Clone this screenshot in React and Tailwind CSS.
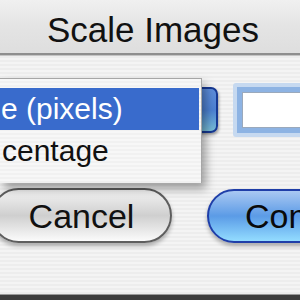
import React from "react";

const stripes =
  "bg-[repeating-linear-gradient(180deg,#ededed_0px,#ededed_2px,#f4f4f4_2px,#f4f4f4_4px)]";

const ScaleImagesDialog = () => {
  return (
    <div className="relative w-[300px] h-[300px] overflow-hidden flex flex-col font-['Liberation_Sans',Arial,sans-serif]">
      {/* title bar */}
      <div className="h-[55px] shrink-0 bg-gradient-to-b from-[#f0f0f0] via-[#e4e4e4] to-[#dedede] border-b-2 border-[#8e8e8e] pt-[12px] pl-[6px] text-center text-[35px] leading-[35px] text-[#111]">
        Scale Images
      </div>

      <div className={`flex-1 flex flex-col border-t border-[#c4c4c4] ${stripes}`}>
        {/* popup + text field */}
        <div className="flex items-center gap-[15px] pt-[27px]">
          <div className="w-[218px] h-[46px] shrink-0 rounded-[7px] border-2 border-[#163892] bg-gradient-to-b from-[#5d8ddb] via-[#4c80d2] to-[#77bcd6] shadow-[1px_2px_3px_rgba(0,0,0,0.35)]" />
          <div className="w-[120px] h-[54px] shrink-0 rounded-[3px] border-4 border-[#c6d9f0] bg-white">
            <div className="w-full h-full border-[5px] border-[#8db3e3]">
              <div className="w-full h-full border border-[#9aa9bc] bg-white" />
            </div>
          </div>
        </div>

        {/* buttons */}
        <div className="flex items-start gap-[35px] mt-[51px] -ml-[9px]">
          <button
            type="button"
            className="w-[181px] h-[55px] shrink-0 rounded-full border-2 border-[#5e5e5e] bg-gradient-to-b from-[#f4f4f4] via-[#cfcfcf] to-[#fbfbfb] shadow-[0_3px_4px_rgba(0,0,0,0.3)] text-[34px] leading-[34px] text-[#111]"
          >
            Cancel
          </button>
          <button
            type="button"
            className="w-[212px] h-[54px] mt-[1px] shrink-0 rounded-full border-2 border-[#1f3ea8] bg-gradient-to-b from-[#a9c8f2] via-[#5b9be6] to-[#93dcff] shadow-[0_3px_4px_rgba(0,0,0,0.3)] text-[34px] leading-[34px] text-[#0a0a0a]"
          >
            Continue
          </button>
        </div>
      </div>

      {/* bottom edge */}
      <div className="h-[6px] shrink-0 bg-[#3e3e3e] border-t border-[#9a9a9a]" />

      {/* open popup menu */}
      <div className="absolute left-0 top-[78px] w-[202px] h-[105px] border-t border-r border-[#a6a6a6] bg-[repeating-linear-gradient(180deg,#f7f7f7_0px,#f7f7f7_2px,#f1f1f1_2px,#f1f1f1_4px)] shadow-[4px_6px_9px_rgba(0,0,0,0.35)] pt-[9px] text-[30px]">
        <div className="h-[42px] w-[199px] bg-[#396bcc] text-white leading-[42px] pl-[1px] whitespace-nowrap">
          e (pixels)
        </div>
        <div className="h-[42px] leading-[42px] text-[#111] pl-[2px] whitespace-nowrap">
          centage
        </div>
      </div>
    </div>
  );
};

export default function App() {
  return <ScaleImagesDialog />;
}
